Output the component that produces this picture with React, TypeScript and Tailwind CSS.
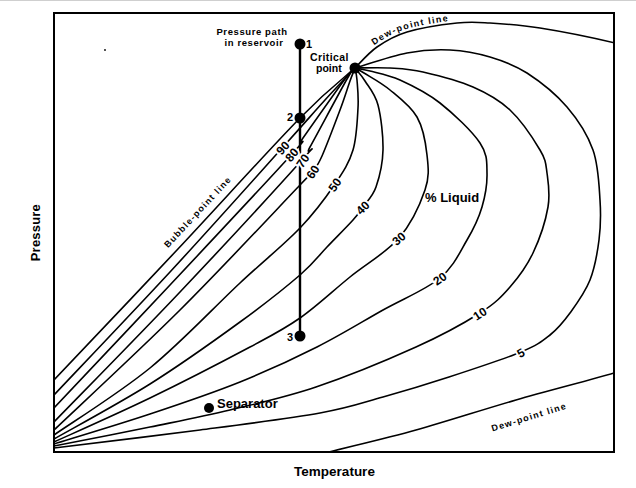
type Pt = [number, number];

// catmull-rom through the sampled points, as cubic beziers
function smooth(pts: Pt[]): string {
  let d = `M${pts[0][0]},${pts[0][1]}`;
  for (let i = 0; i < pts.length - 1; i++) {
    const p0 = pts[i - 1] || pts[i];
    const p1 = pts[i];
    const p2 = pts[i + 1];
    const p3 = pts[i + 2] || p2;
    const c1x = p1[0] + (p2[0] - p0[0]) / 6;
    const c1y = p1[1] + (p2[1] - p0[1]) / 6;
    const c2x = p2[0] - (p3[0] - p1[0]) / 6;
    const c2y = p2[1] - (p3[1] - p1[1]) / 6;
    d += ` C${c1x.toFixed(1)},${c1y.toFixed(1)} ${c2x.toFixed(1)},${c2y.toFixed(1)} ${p2[0]},${p2[1]}`;
  }
  return d;
}

const CP: Pt = [355, 68];

const curves: Pt[][] = [
  // bubble-point line
  [[54, 380], [177, 250], [300, 118], CP],
  // 90
  [[54, 395], [170, 272], [283, 147], [325, 100], CP],
  // 80
  [[54, 408], [170, 285], [292, 154], [303, 138], [345, 79], CP],
  // 70
  [[54, 422], [180, 292], [302, 160], [310, 147], [347, 79], CP],
  // 60
  [[54, 430], [180, 310], [300, 185], [313, 171], [322, 156], [340, 110], [350, 81], CP],
  // 50
  [[54, 435], [150, 368], [240, 283], [300, 228], [335, 184], [353, 150], [358, 108], [357, 80], CP],
  // 40
  [[54, 439], [150, 384], [240, 322], [300, 275], [327, 247], [353, 220], [363, 207], [376, 187], [383, 150], [378, 105], [365, 81], CP],
  // 30
  [[54, 442], [150, 398], [250, 347], [300, 318], [350, 277], [399, 238], [425, 190], [427, 155], [417, 117], [390, 90], [364, 73], CP],
  // 20
  [[54, 444], [150, 414], [240, 382], [317, 347], [383, 310], [440, 278], [467, 240], [482, 207], [487, 173], [480, 143], [440, 103], [400, 80], [370, 71], CP],
  // 10
  [[54, 446], [150, 427], [230, 410], [316, 387], [416, 347], [480, 313], [510, 287], [533, 253], [548, 207], [547, 173], [540, 150], [510, 110], [473, 87], [423, 72], [390, 68], CP],
  // 5
  [[54, 448], [200, 430], [320, 413], [383, 397], [449, 377], [521, 352], [550, 335], [570, 313], [590, 280], [599, 240], [600, 200], [593, 150], [567, 107], [527, 73], [490, 57], [450, 50], [407, 53], CP],
];

const dewTop: Pt[] = [CP, [377, 47], [407, 32], [457, 23], [490, 23], [540, 28], [615, 43], [640, 52]];
const dewBottom: Pt[] = [[300, 460], [329, 452], [416, 430], [516, 400], [614, 373], [640, 362]];

const curveLabels: { t: string; x: number; y: number; r: number }[] = [
  { t: "90", x: 283, y: 148, r: -48 },
  { t: "80", x: 292, y: 155, r: -50 },
  { t: "70", x: 303, y: 161, r: -55 },
  { t: "60", x: 313, y: 172, r: -58 },
  { t: "50", x: 335, y: 185, r: -55 },
  { t: "40", x: 363, y: 208, r: -45 },
  { t: "30", x: 399, y: 239, r: -40 },
  { t: "20", x: 440, y: 279, r: -35 },
  { t: "10", x: 480, y: 314, r: -33 },
  { t: "5", x: 521, y: 353, r: -30 },
];

const font = "'Liberation Sans', Arial, sans-serif";

function PhaseChart() {
  return (
    <svg width={563} height={442} viewBox="53 12 563 442" className="block shrink-0" fontFamily={font}>
      <defs>
        <clipPath id="frame">
          <rect x={54} y={13} width={560} height={439} />
        </clipPath>
        <path id="dew-top" d={smooth(dewTop)} />
      </defs>

      <g clipPath="url(#frame)" fill="none" stroke="#000" strokeWidth={1.6} strokeLinecap="round">
        {curves.map((c, i) => (
          <path key={i} d={smooth(c)} />
        ))}
        <path d={smooth(dewTop)} />
        <path d={smooth(dewBottom)} />
      </g>

      {/* pressure path in reservoir */}
      <line x1={300} y1={44} x2={300} y2={336} stroke="#000" strokeWidth={2.4} />

      {/* labels sitting on the curves, white halo breaks the line */}
      <g fontSize={12} fontWeight={700} textAnchor="middle" dominantBaseline="central">
        {curveLabels.map((l) => (
          <text
            key={l.t}
            x={l.x}
            y={l.y}
            transform={`rotate(${l.r} ${l.x} ${l.y})`}
            stroke="#fff"
            strokeWidth={4}
            paintOrder="stroke"
            fill="#000"
          >
            {l.t}
          </text>
        ))}
      </g>

      <circle cx={300} cy={44} r={5.5} fill="#000" />
      <circle cx={300} cy={118} r={5.5} fill="#000" />
      <circle cx={300} cy={336} r={5.5} fill="#000" />
      <circle cx={CP[0]} cy={CP[1]} r={5.5} fill="#000" />
      <circle cx={209} cy={408} r={5} fill="#000" />
      <circle cx={105} cy={50} r={0.9} fill="#000" />

      <g fill="#000" fontWeight={700}>
        <text x={252} y={35} fontSize={9.5} letterSpacing={0.6} textAnchor="middle">
          Pressure path
        </text>
        <text x={254} y={46} fontSize={9.5} letterSpacing={0.6} textAnchor="middle">
          in reservoir
        </text>
        <text x={306} y={48} fontSize={11}>1</text>
        <text x={293} y={121} fontSize={11} textAnchor="end">2</text>
        <text x={293} y={341} fontSize={11} textAnchor="end">3</text>
        <text x={310} y={61} fontSize={10.5} letterSpacing={0.4}>Critical</text>
        <text x={316} y={72} fontSize={10.5}>point</text>
        <text x={217} y={408} fontSize={13}>Separator</text>
        <text x={425} y={202} fontSize={13}>% Liquid</text>

        <text fontSize={9} letterSpacing={1.2} dy={-3}>
          <textPath href="#dew-top" startOffset={29}>
            Dew-point line
          </textPath>
        </text>
        <text
          x={200}
          y={214}
          fontSize={9}
          letterSpacing={1.2}
          textAnchor="middle"
          transform="rotate(-47 200 214)"
        >
          Bubble-point line
        </text>
        <text
          x={530}
          y={420}
          fontSize={9}
          letterSpacing={1.2}
          textAnchor="middle"
          transform="rotate(-17 530 420)"
        >
          Dew-point line
        </text>
      </g>

      <rect x={54} y={13} width={560} height={439} fill="none" stroke="#000" strokeWidth={2} />
    </svg>
  );
}

export default function App() {
  return (
    <div className="w-[636px] h-[488px] bg-white border-t border-[#cfcfcf] overflow-hidden font-['Liberation_Sans',Arial,sans-serif] text-black">
      <div className="flex pt-[11px]">
        <div className="w-[53px] shrink-0 flex items-center justify-end pr-[11px]">
          <span className="[writing-mode:vertical-rl] rotate-180 text-[13px] font-bold leading-none tracking-[0.2px]">
            Pressure
          </span>
        </div>
        <PhaseChart />
      </div>
      <div className="ml-[53px] w-[563px] mt-[10px] text-center text-[13.5px] font-bold leading-4">
        Temperature
      </div>
    </div>
  );
}
